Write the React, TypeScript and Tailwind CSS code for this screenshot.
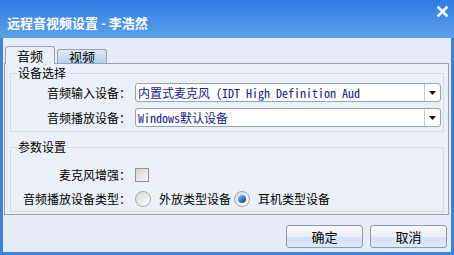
import React from 'react'

function Dropdown({ children }: { children: React.ReactNode }) {
  return (
    <div className="flex h-[19px] w-[306px] items-stretch rounded-[3px] border border-[#97a4b2] bg-white">
      <div className="flex-1 overflow-hidden whitespace-pre pl-[2px] font-['Noto_Sans_Mono_CJK_SC','Liberation_Mono',monospace] text-[12px] leading-[17px] text-[#14218c]">
        {children}
      </div>
      <div className="flex w-[16px] items-center justify-center border-l border-[#c3cbd4]">
        <svg width="7" height="4" viewBox="0 0 7 4">
          <path d="M0 0h7L3.5 4z" fill="#111" />
        </svg>
      </div>
    </div>
  )
}

function Radio({ checked }: { checked?: boolean }) {
  return (
    <div className="flex h-[16px] w-[16px] items-center justify-center rounded-full border border-[#a3a8ae] bg-gradient-to-br from-[#d4d7db] to-[#ffffff]">
      {checked && (
        <div className="h-[8px] w-[8px] rounded-full bg-gradient-to-br from-[#9ccaf2] via-[#3c80d0] to-[#15427f]" />
      )}
    </div>
  )
}

export default function App() {
  return (
    <div className="flex h-[255px] w-[454px] flex-col bg-[#3a83e2] font-['Noto_Sans_CJK_SC','Noto_Sans',sans-serif] text-[12px] text-black">
      {/* title bar */}
      <div className="flex h-[38px] items-start justify-between bg-gradient-to-b from-[#2f7ce2] to-[#5d9fea] pl-[7px] pr-[6px]">
        <span className="mt-[14px] whitespace-pre text-[13px] font-bold leading-[18px] text-white">
          远程音视频设置 - 李浩然
        </span>
        <svg className="mt-[6px]" width="11" height="11" viewBox="0 0 11 11">
          <path d="M1.5 1.5l8 8M9.5 1.5l-8 8" stroke="#fff" strokeWidth="2.6" strokeLinecap="square" />
        </svg>
      </div>

      <div className="mx-[3px] mb-[3px] flex flex-1 flex-col bg-[#e5edf6]">
        {/* tabs */}
        <div className="flex items-end gap-[2px] pl-[2px] pt-[8px]">
          <div className="relative z-10 -mb-px flex h-[18px] w-[50px] items-center justify-center rounded-t-[3px] border border-b-0 border-[#9aa3ad] bg-[#eaf0f7] text-[13px] leading-none">
            音频
          </div>
          <div className="flex h-[14px] w-[50px] items-center justify-center rounded-t-[3px] border border-b-0 border-[#9aa3ad] bg-gradient-to-b from-[#e1eaf6] to-[#b7cfee] text-[13px] leading-none">
            视频
          </div>
        </div>

        {/* panel */}
        <div className="ml-[1px] mr-[2px] flex h-[152px] flex-col border border-[#9aa3ad] bg-[#eaf0f7]">
          <fieldset className="ml-[5px] mr-[4px] mt-[2px] border border-[#d2dae3] pb-[4px]">
            <legend className="ml-[6px] px-[1px] leading-[14px]">设备选择</legend>
            <div className="flex flex-col gap-[6px] pt-[3px]">
              <div className="flex items-center">
                <span className="w-[120px] text-right leading-[16px]">音频输入设备：</span>
                <div className="ml-[4px]">
                  <Dropdown>内置式麦克风 (IDT High Definition Aud</Dropdown>
                </div>
              </div>
              <div className="flex items-center">
                <span className="w-[120px] text-right leading-[16px]">音频播放设备：</span>
                <div className="ml-[4px]">
                  <Dropdown>Windows默认设备</Dropdown>
                </div>
              </div>
            </div>
          </fieldset>

          <fieldset className="ml-[5px] mr-[4px] mt-[8px] border border-[#d2dae3] pb-[4px]">
            <legend className="ml-[6px] px-[1px] leading-[14px]">参数设置</legend>
            <div className="flex flex-col gap-[8px] pt-[13px]">
              <div className="flex h-[16px] items-center">
                <span className="w-[120px] text-right leading-[16px]">麦克风增强：</span>
                <div className="ml-[4px] h-[14px] w-[14px] border border-[#8e9297] bg-gradient-to-br from-[#d2d4d7] to-[#f7f7f7]" />
              </div>
              <div className="flex h-[16px] items-center">
                <span className="w-[120px] text-right leading-[16px]">音频播放设备类型：</span>
                <div className="ml-[4px]">
                  <Radio />
                </div>
                <span className="ml-[8px] leading-[16px]">外放类型设备</span>
                <div className="ml-[3px]">
                  <Radio checked />
                </div>
                <span className="ml-[8px] leading-[16px]">耳机类型设备</span>
              </div>
            </div>
          </fieldset>
        </div>

        {/* buttons */}
        <div className="flex justify-end gap-[7px] pr-[4px] pt-[10px]">
          <button className="h-[23px] w-[77px] rounded-[3px] border border-[#8d9cb0] bg-[linear-gradient(#f7f9fc,#e8eff8_50%,#d5e3f3_52%,#dde8f5)] text-[13px] leading-none">
            确定
          </button>
          <button className="h-[23px] w-[77px] rounded-[3px] border border-[#8d9cb0] bg-[linear-gradient(#f7f9fc,#e8eff8_50%,#d5e3f3_52%,#dde8f5)] text-[13px] leading-none">
            取消
          </button>
        </div>
      </div>
    </div>
  )
}
